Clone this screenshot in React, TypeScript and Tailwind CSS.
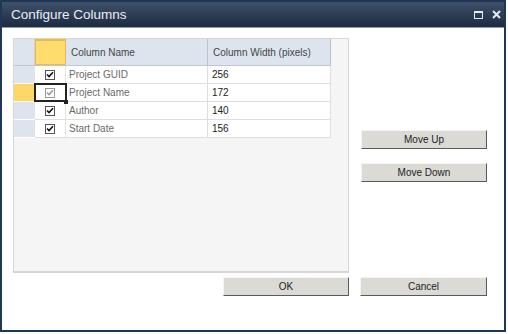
import React from "react";

const rows = [
  { name: "Project GUID", width: "256", current: false },
  { name: "Project Name", width: "172", current: true },
  { name: "Author", width: "140", current: false },
  { name: "Start Date", width: "156", current: false },
];

function Check({ dim }: { dim?: boolean }) {
  return (
    <div
      className={`w-[10px] h-[10px] border flex items-center justify-center bg-white ${
        dim ? "border-[#9a9a9a]" : "border-[#555]"
      }`}
    >
      <svg width="8" height="8" viewBox="0 0 8 8">
        <path
          d="M1 3.5 L3 5.5 L7 1.2"
          fill="none"
          stroke={dim ? "#9a9a9a" : "#111"}
          strokeWidth="1.6"
        />
      </svg>
    </div>
  );
}

function Btn({ label, w }: { label: string; w: string }) {
  return (
    <button
      className={`${w} h-[19px] bg-[#dcdad4] border border-t-[#f4f4f2] border-l-[#f4f4f2] border-r-[#5a5a5a] border-b-[#5a5a5a] text-[10px] text-[#222] flex items-center justify-center`}
    >
      {label}
    </button>
  );
}

export default function App() {
  return (
    <div className="w-[508px] h-[334px] bg-white font-['Liberation_Sans',Arial,sans-serif]">
      <div className="w-[506px] h-[332px] border-2 border-[#1f3656] flex flex-col bg-white">
        {/* title bar */}
        <div className="h-[26px] bg-gradient-to-b from-[#3f5169] to-[#1d2b40] flex items-center justify-between pl-[9px] pr-[2px] border-b border-[#8e9aab]">
          <span className="text-[13.5px] text-[#e8eef6] pt-[1px]">Configure Columns</span>
          <div className="flex items-center gap-[9px] pr-[1px]">
            <div className="w-[9px] h-[8px] border border-[#e6ebf1] border-t-[2px]" />
            <svg width="9" height="9" viewBox="0 0 9 9">
              <path d="M1 1 L8 8 M8 1 L1 8" stroke="#e6ebf1" strokeWidth="2" />
            </svg>
          </div>
        </div>

        {/* content */}
        <div className="flex flex-col pl-[11px] pt-[10px]">
          <div className="flex gap-[12px]">
            <div className="w-[336px] h-[235px] border border-[#d6d6d8] border-b-2 bg-[#f5f5f5]">
              <div className="w-[317px] bg-white">
                {/* header */}
                <div className="grid grid-cols-[21px_31px_142px_123px] h-[27px] border-b border-[#bcc7d4]">
                  <div className="bg-[#dde4ed] border-r border-[#c9d3df]" />
                  <div className="bg-[#ffdc6e] border border-[#f0b848] border-t-[2px]" />
                  <div className="bg-[#dde4ee] border-r border-[#b7c3d1] flex items-center pl-[5px] text-[10px] text-[#444]">
                    Column Name
                  </div>
                  <div className="bg-[#dde4ee] border-r border-[#b7c3d1] flex items-center pl-[5px] text-[10px] text-[#444]">
                    Column Width (pixels)
                  </div>
                </div>
                {rows.map((r) => (
                  <div
                    key={r.name}
                    className="grid grid-cols-[21px_31px_142px_123px] h-[18px] border-b border-[#dedede]"
                  >
                    <div
                      className={`${r.current ? "bg-[#ffd769]" : "bg-[#dde4ee]"} border-b border-white -mb-px`}
                    />
                    <div
                      className={`relative flex items-center justify-center border-r border-[#e2e6de] ${
                        r.current ? "outline-2 outline-[#222] -outline-offset-1 z-10" : ""
                      }`}
                    >
                      <Check dim={r.current} />
                      {r.current && (
                        <div className="absolute right-[-3px] bottom-[-3px] w-[4px] h-[4px] bg-[#222]" />
                      )}
                    </div>
                    <div className="flex items-center pl-[3px] text-[10px] text-[#6a6a6a] border-r border-[#dedede]">
                      {r.name}
                    </div>
                    <div className="flex items-center pl-[4px] text-[10px] text-[#222] border-r border-[#dedede]">
                      {r.width}
                    </div>
                  </div>
                ))}
              </div>
            </div>
            <div className="flex flex-col pt-[92px] gap-[14px]">
              <Btn label="Move Up" w="w-[126px]" />
              <Btn label="Move Down" w="w-[126px]" />
            </div>
          </div>
          <div className="flex pl-[210px] pt-[4px] gap-[11px]">
            <Btn label="OK" w="w-[126px]" />
            <Btn label="Cancel" w="w-[127px]" />
          </div>
        </div>
      </div>
    </div>
  );
}
